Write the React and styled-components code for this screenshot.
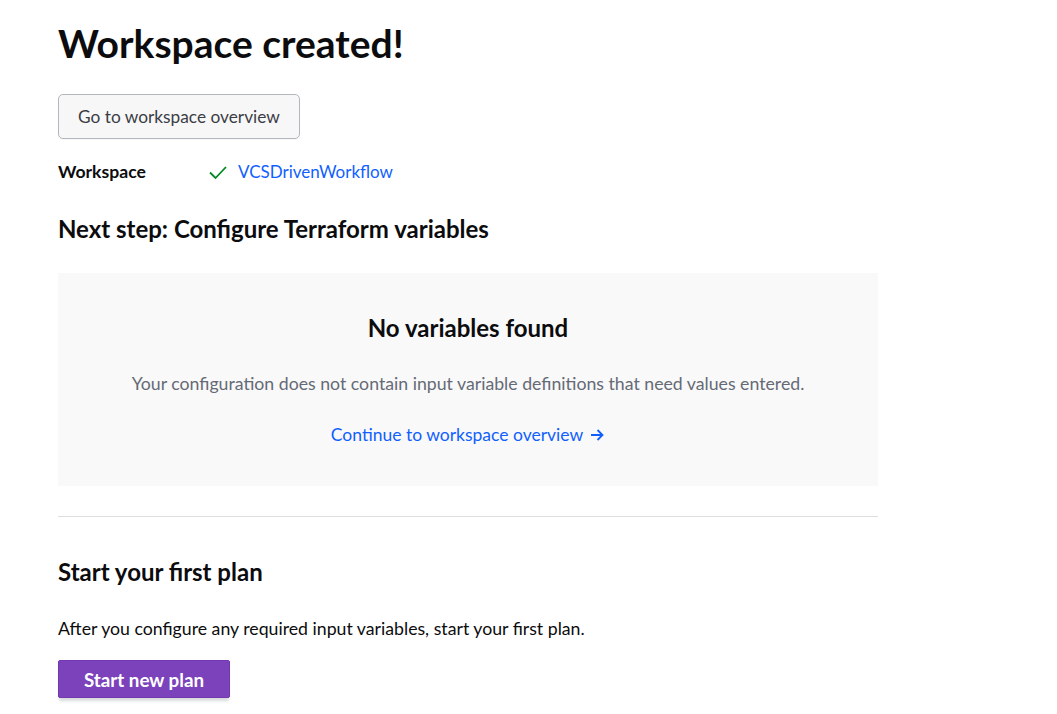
import React from 'react'
import styled, { createGlobalStyle } from 'styled-components'

const GlobalStyle = createGlobalStyle`
  body {
    margin: 0;
    background: #ffffff;
    font-family: "Segoe UI", Lato, "Noto Sans", sans-serif;
    color: #0c0c0e;
  }
`

const Page = styled.div`
  padding: 0 0 20px 58px;
  width: 820px;
`

const Title = styled.h1`
  margin: 19px 0 0;
  font-size: 39px;
  line-height: 48px;
  font-weight: 700;
`

const SecondaryButton = styled.button`
  margin-top: 27px;
  height: 45px;
  padding: 0 19px;
  border: 1px solid #b2b6bd;
  border-radius: 5px;
  background: #f7f7f8;
  color: #3b3d45;
  font-family: inherit;
  font-size: 17.3px;
  box-shadow: 0 1px 1px rgba(101, 106, 118, 0.05);
`

const InfoRow = styled.div`
  display: grid;
  grid-template-columns: 150px auto;
  align-items: center;
  margin-top: 21px;
  line-height: 24px;
  font-size: 17px;
`

const Label = styled.span`
  font-weight: 700;
  font-size: 17.6px;
`

const WorkspaceLink = styled.a`
  display: flex;
  align-items: center;
  gap: 10px;
  color: #1060ff;
  text-decoration: none;
`

const SectionTitle = styled.h2`
  margin: ${p => p.$top}px 0 0;
  font-size: 24px;
  line-height: 28px;
  font-weight: 700;
`

const EmptyPanel = styled.div`
  margin-top: 30px;
  background: #f9f9f9;
  padding: 41px 20px 39px;
  display: flex;
  flex-direction: column;
  align-items: center;
  text-align: center;
`

const EmptyTitle = styled.h3`
  margin: 0;
  font-size: 24px;
  line-height: 28px;
  font-weight: 700;
`

const EmptyText = styled.p`
  margin: 30px 0 0;
  font-size: 17.7px;
  line-height: 24px;
  color: #656a76;
`

const ContinueLink = styled.a`
  margin-top: 27px;
  display: flex;
  align-items: center;
  gap: 6px;
  font-size: 17.5px;
  line-height: 24px;
  color: #1060ff;
  text-decoration: none;
`

const Divider = styled.hr`
  margin: 30px 0 0;
  border: 0;
  border-top: 1px solid #dedee0;
`

const Text = styled.p`
  margin: 31px 0 0;
  font-size: 17.7px;
  line-height: 24px;
`

const PrimaryButton = styled.button`
  margin-top: 19px;
  width: 172px;
  height: 38px;
  border: 1px solid #7138b0;
  border-radius: 2px;
  background: #7b42bc;
  color: #ffffff;
  font-family: inherit;
  font-size: 18.8px;
  font-weight: 700;
  box-shadow: 0 4px 3px -1px rgba(101, 106, 118, 0.25);
`

const Check = () => (
  <svg width="20" height="20" viewBox="0 0 20 20" fill="none">
    <path d="M2 10.5l5.5 5.5L18 5" stroke="#008a22" strokeWidth="1.8" />
  </svg>
)

const Arrow = () => (
  <svg width="16" height="16" viewBox="0 0 16 16" fill="none">
    <path d="M2 8h11.5M8.5 3l5 5-5 5" stroke="#1060ff" strokeWidth="1.8" />
  </svg>
)

export default function App() {
  return (
    <Page>
      <GlobalStyle />
      <Title>Workspace created!</Title>
      <SecondaryButton>Go to workspace overview</SecondaryButton>
      <InfoRow>
        <Label>Workspace</Label>
        <WorkspaceLink href="#"><Check />VCSDrivenWorkflow</WorkspaceLink>
      </InfoRow>
      <SectionTitle $top={31}>Next step: Configure Terraform variables</SectionTitle>
      <EmptyPanel>
        <EmptyTitle>No variables found</EmptyTitle>
        <EmptyText>Your configuration does not contain input variable definitions that need values entered.</EmptyText>
        <ContinueLink href="#">Continue to workspace overview <Arrow /></ContinueLink>
      </EmptyPanel>
      <Divider />
      <SectionTitle $top={41}>Start your first plan</SectionTitle>
      <Text>After you configure any required input variables, start your first plan.</Text>
      <PrimaryButton>Start new plan</PrimaryButton>
    </Page>
  )
}
